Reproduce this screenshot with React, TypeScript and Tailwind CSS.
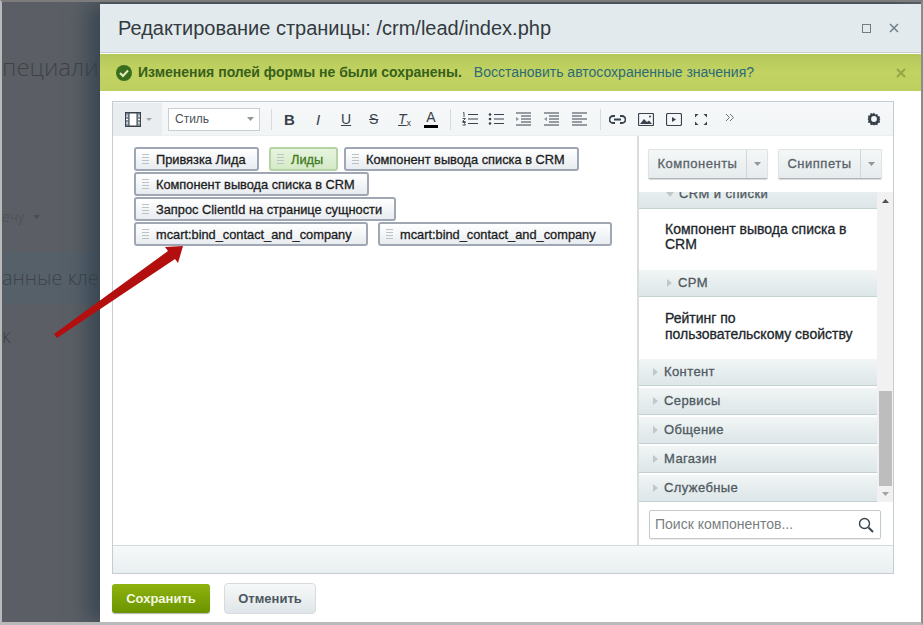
import React from "react"

const font = "font-['Liberation_Sans',Arial,sans-serif]"

function Tag({ text, green, className = "" }: { text: string; green?: boolean; className?: string }) {
  return (
    <div className={`h-[24px] shrink-0 flex items-center rounded-[3px] border-2 pl-[6px] ${green ? "border-[#b5d3a5] bg-gradient-to-b from-[#e6f4dd] to-[#d5eac8] text-[#3f7a1c]" : "border-[#a0a7b4] bg-gradient-to-b from-[#ffffff] to-[#e8ecf0] text-[#1c1c1c]"} ${className}`}>
      <span className="w-[7px] h-[11px] mr-[7px] shrink-0 flex flex-col justify-between">
        <i className="block h-px bg-[#bcc2c6]" /><i className="block h-px bg-[#bcc2c6]" /><i className="block h-px bg-[#bcc2c6]" /><i className="block h-px bg-[#bcc2c6]" />
      </span>
      <span className="text-[12.8px] leading-none pt-[3px] [-webkit-text-stroke:0.3px] whitespace-nowrap">{text}</span>
    </div>
  )
}

function Section({ text, arrowX = "ml-[26px]" }: { text: string; arrowX?: string }) {
  return (
    <div className="h-[29px] shrink-0 flex items-center border-b border-[#c5d0d3] border-t-2 border-t-white bg-gradient-to-b from-[#f1f5f5] to-[#dde6e8]">
      <svg width="5" height="8" viewBox="0 0 5 8" className={`${arrowX} mr-[6px] shrink-0`}><path d="M0 0l5 4-5 4z" fill="#c0c8ca" /></svg>
      <span className="text-[13px] [-webkit-text-stroke:0.3px] text-[#4f5a61] tracking-[0.4px]">{text}</span>
    </div>
  )
}

function SplitButton({ text, w }: { text: string; w: string }) {
  return (
    <div className={`h-[30px] ${w} flex rounded-[2px] border border-[#dfe3e5] border-b-[#aeb5b8] bg-gradient-to-b from-[#f5f7f7] to-[#e6ebed] shadow-[0_1px_1px_rgba(0,0,0,0.15)]`}>
      <div className="flex-1 flex items-center justify-center text-[13px] [-webkit-text-stroke:0.3px] text-[#59636a] tracking-[0.5px]">{text}</div>
      <div className="w-[21px] border-l border-[#d0d6d8] flex items-center justify-center">
        <svg width="7" height="4" viewBox="0 0 7 4"><path d="M0 0h7L3.5 4z" fill="#8f989c" /></svg>
      </div>
    </div>
  )
}

const Sep = () => <span className="block w-px h-[21px] bg-[#d5dade] shrink-0" />
const ic = { fill: "none", stroke: "#39434d", strokeWidth: 1.2 }

function Toolbar() {
  return (
    <div className="h-[34px] shrink-0 flex items-center pt-[1px] border-b border-[#eceff1] bg-gradient-to-b from-[#f6f8f9] to-[#f2f5f6]">
      <div className="w-[49px] h-full flex items-center bg-[#e9edf0] pl-[12px] shrink-0">
        <svg width="16" height="15" viewBox="0 0 16 15"><rect x="0.5" y="0.5" width="15" height="14" {...ic} fill="#8d97a0" /><rect x="4" y="1" width="8" height="13" fill="#fff" stroke="#39434d" /><path d="M1 4h2M1 7.5h2M1 11h2M13 4h2M13 7.5h2M13 11h2" stroke="#fff" /></svg>
        <svg width="6" height="3" viewBox="0 0 6 3" className="ml-[5px]"><path d="M0 0h6L3 3z" fill="#a0a8ad" /></svg>
      </div>
      <div className="w-[92px] h-[23px] ml-[6px] shrink-0 flex items-center justify-between border border-[#c9ced2] bg-white pl-[6px] pr-[5px] text-[12px] text-[#4b5359]">
        Стиль
        <svg width="7" height="4" viewBox="0 0 7 4"><path d="M0 0h7L3.5 4z" fill="#8f989c" /></svg>
      </div>
      <span className="ml-[11px]"><Sep /></span>
      <span className="ml-[12px] w-[11px] text-[15px] font-bold text-[#37414b] leading-none">B</span>
      <span className="ml-[21px] w-[7px] text-[15px] italic text-[#37414b] leading-none">I</span>
      <span className="ml-[18px] w-[10px] text-[14px] text-[#37414b] leading-none underline">U</span>
      <span className="ml-[18px] w-[10px] text-[14px] text-[#37414b] leading-none line-through">S</span>
      <span className="ml-[19px] w-[16px] text-[14px] italic text-[#37414b] leading-none underline">T<sub className="text-[9px] not-italic">x</sub></span>
      <span className="ml-[10px] w-[14px] flex flex-col items-center text-[14px] leading-[13px] text-[#37414b]">A<i className="block w-[14px] h-[3px] bg-black mt-[1px]" /></span>
      <span className="ml-[12px]"><Sep /></span>
      <svg width="16" height="14" viewBox="0 0 16 14" className="ml-[11px]"><path d="M6 2.5h10M6 7h10M6 11.5h10" {...ic} /><path d="M1 1l1-.5V5M0.5 6.5h3l-3 3h3M0.5 10.5h3l-1 1 1 1.5h-3" fill="none" stroke="#39434d" strokeWidth="0.9" /></svg>
      <svg width="16" height="14" viewBox="0 0 16 14" className="ml-[10px]"><path d="M6 2.5h10M6 7h10M6 11.5h10" {...ic} /><circle cx="2" cy="2.5" r="1.3" fill="#39434d" /><circle cx="2" cy="7" r="1.3" fill="#39434d" /><circle cx="2" cy="11.5" r="1.3" fill="#39434d" /></svg>
      <svg width="16" height="14" viewBox="0 0 16 14" className="ml-[12px]"><path d="M0 1h15M5 4h10M5 7h10M5 10h10M0 13h15" {...ic} /><path d="M0 5l3 2-3 2z" fill="#8d97a0" /></svg>
      <svg width="16" height="14" viewBox="0 0 16 14" className="ml-[12px]"><path d="M0 1h15M5 4h10M5 7h10M5 10h10M0 13h15" {...ic} /><path d="M3 5L0 7l3 2z" fill="#8d97a0" /></svg>
      <svg width="15" height="14" viewBox="0 0 15 14" className="ml-[12px]"><path d="M0 1h15M0 4h10M0 7h15M0 10h10M0 13h15" {...ic} /></svg>
      <span className="ml-[13px]"><Sep /></span>
      <svg width="17" height="9" viewBox="0 0 17 9" className="ml-[8px]"><path d="M6 1H4a3.5 3.5 0 000 7h2M11 1h2a3.5 3.5 0 010 7h-2M5 4.5h7" fill="none" stroke="#37414b" strokeWidth="1.8" /></svg>
      <svg width="16" height="13" viewBox="0 0 16 13" className="ml-[12px]"><rect x="0.5" y="0.5" width="15" height="12" rx="1" {...ic} /><path d="M2 11l4-5 3 3 2-1.5 3 3.5z" fill="#39434d" /><circle cx="12" cy="3.5" r="1" fill="#39434d" /></svg>
      <svg width="16" height="13" viewBox="0 0 16 13" className="ml-[12px]"><rect x="0.5" y="0.5" width="15" height="12" rx="1.5" {...ic} /><path d="M6 4l4 2.5L6 9z" fill="#39434d" /></svg>
      <svg width="14" height="13" viewBox="0 0 14 13" className="ml-[12px]"><path d="M1 1h3.5L1 4.5zM13 1H9.5L13 4.5zM1 12h3.5L1 8.5zM13 12H9.5L13 8.5z" fill="#39434d" /></svg>
      <svg width="10" height="9" viewBox="0 0 10 9" className="ml-[17px] mb-[3px]"><path d="M1 1l3.5 3.5L1 8M5 1l3.5 3.5L5 8" fill="none" stroke="#6a737a" /></svg>
      <svg width="14" height="14" viewBox="0 0 24 24" className="ml-auto mr-[12px]"><path d="M12 1l2 3.2 3.7-.9 1 3.7 3.7 1-.9 3.7L23 12l-1.5 2.3.9 3.7-3.7 1-1 3.7-3.7-.9L12 23l-2-1.2-3.7.9-1-3.7-3.7-1 .9-3.7L1 12l1.5-1.7-.9-3.7 3.7-1 1-3.7 3.7.9z" fill="#37414b" /><circle cx="12" cy="12" r="5" fill="#f4f6f7" /></svg>
    </div>
  )
}

export default function App() {
  return (
    <div className={`${font} relative w-[923px] h-[625px] overflow-hidden bg-[#5b5f65] border-t-[2px] border-t-[#7c7c7c] border-l-[2px] border-l-[#b9b9b9] border-r-[2px] border-r-[#8c8c8c] border-b-[3px] border-b-[#b9b9b9]`}>
      <div className="text-[#3f4349] font-['Open_Sans',sans-serif] font-light">
        <div className="text-[24px] leading-[32px] mt-[49px] whitespace-nowrap">пециали</div>
        <div className="flex items-center gap-[9px] text-[14px] leading-[18px] mt-[125px] text-[#4a4e54]">
          ечу
          <svg width="7" height="4" viewBox="0 0 7 4"><path d="M0 0h7L3.5 4z" fill="#4a4e54" /></svg>
        </div>
        <div className="mt-[26px] h-[52px] bg-[#566069] flex items-center text-[20px] whitespace-nowrap">анные клей</div>
        <div className="text-[20px] mt-[18px] leading-[28px]">к</div>
      </div>

      {/* modal */}
      <div className="absolute left-[98px] top-[2px] w-[823px] h-[618px] bg-white flex flex-col shadow-[-12px_0_20px_rgba(45,62,75,0.75)]">
        <div className="h-[49px] shrink-0 flex items-center bg-[#e2eaed] border-b border-[#c8ced1] pl-[18px] pr-[23px]">
          <span className="text-[20px] text-[#333a40]">Редактирование страницы: /crm/lead/index.php</span>
          <svg width="9" height="9" viewBox="0 0 9 9" className="ml-auto"><rect x="0.5" y="0.5" width="8" height="8" fill="none" stroke="#6f7d87" /></svg>
          <svg width="10" height="10" viewBox="0 0 10 10" className="ml-[18px] mr-[1px]"><path d="M1 1l8 8M9 1L1 9" stroke="#6f7d87" strokeWidth="1.5" /></svg>
        </div>
        <div className="h-[37px] mt-px shrink-0 flex items-center bg-gradient-to-b from-[#b4c85a] via-[#c2d362] to-[#bdcf60] pl-[16px] pr-[17px]">
          <svg width="16" height="16" viewBox="0 0 16 16"><circle cx="8" cy="8" r="8" fill="#3a6d1e" /><path d="M4 8l3 3 5-5.5" fill="none" stroke="#e5efc0" strokeWidth="2" /></svg>
          <span className="ml-[6px] text-[14px] font-bold text-[#37601a]">Изменения полей формы не были сохранены.</span>
          <span className="ml-[12px] text-[14px] text-[#2c6a76]">Восстановить автосохраненные значения?</span>
          <svg width="10" height="10" viewBox="0 0 10 10" className="ml-auto"><path d="M1 1l8 8M9 1L1 9" stroke="#93a745" strokeWidth="2" /></svg>
        </div>

        <div className="mt-[10px] mx-[12px] w-[782px] h-[473px] border border-[#c6ccd3] flex flex-col shrink-0">
          <Toolbar />
          <div className="flex-1 flex min-h-0">
            <div className="w-[524px] shrink-0 flex flex-col gap-[1px] pt-[11px] pl-[21px]">
              <div className="flex">
                <Tag text="Привязка Лида" className="w-[125px]" />
                <Tag text="Лиды" green className="w-[69px] ml-[10px]" />
                <Tag text="Компонент вывода списка в CRM" className="w-[235px] ml-[6px]" />
              </div>
              <Tag text="Компонент вывода списка в CRM" className="w-[235px]" />
              <Tag text="Запрос ClientId на странице сущности" className="w-[262px]" />
              <div className="flex">
                <Tag text="mcart:bind_contact_and_company" className="w-[234px]" />
                <Tag text="mcart:bind_contact_and_company" className="w-[234px] ml-[10px]" />
              </div>
            </div>
            <div className="flex-1 min-w-0 border-l-2 border-[#d8dde0] flex flex-col">
              <div className="h-[56px] shrink-0 flex items-start pt-[13px] pl-[9px] gap-[10px]">
                <SplitButton text="Компоненты" w="w-[120px]" />
                <SplitButton text="Сниппеты" w="w-[104px]" />
              </div>
              <div className="h-[310px] shrink-0 flex overflow-hidden">
                <div className="w-[238px] shrink-0 flex flex-col">
                  <div className="h-[17px] shrink-0 relative overflow-hidden border-b border-[#c5d0d3] bg-gradient-to-b from-[#e8eef0] to-[#dde6e8]">
                    <svg width="8" height="5" viewBox="0 0 8 5" className="absolute left-[27px] top-0"><path d="M0 0h8L4 5z" fill="#c0c8ca" /></svg>
                    <span className="absolute left-[40px] top-[-8px] text-[13px] [-webkit-text-stroke:0.3px] text-[#4f5a61] tracking-[0.4px]">CRM и списки</span>
                  </div>
                  <div className="h-[59px] shrink-0 pl-[26px] pt-[13px] pr-[20px] text-[14px] leading-[15px] [-webkit-text-stroke:0.3px] text-[#20262b]">Компонент вывода списка в CRM</div>
                  <Section text="СРМ" arrowX="ml-[28px]" />
                  <div className="h-[60px] shrink-0 pl-[26px] pt-[13px] text-[14px] leading-[16px] [-webkit-text-stroke:0.3px] text-[#20262b]">Рейтинг по<br />пользовательскому свойству</div>
                  <Section text="Контент" arrowX="ml-[14px]" />
                  <Section text="Сервисы" arrowX="ml-[14px]" />
                  <Section text="Общение" arrowX="ml-[14px]" />
                  <Section text="Магазин" arrowX="ml-[14px]" />
                  <Section text="Служебные" arrowX="ml-[14px]" />
                </div>
                <div className="w-[16px] shrink-0 bg-[#f1f1f1] flex flex-col items-center pt-[7px]">
                  <svg width="7" height="4" viewBox="0 0 7 4"><path d="M3.5 0L7 4H0z" fill="#505050" /></svg>
                  <div className="w-[13px] h-[95px] mt-[188px] bg-[#bdbdbd]" />
                  <svg width="7" height="4" viewBox="0 0 7 4" className="mt-[6px]"><path d="M0 0h7L3.5 4z" fill="#a3a3a3" /></svg>
                </div>
              </div>
              <div className="flex-1 pl-[10px] pt-[8px]">
                <div className="w-[232px] h-[29px] flex items-center justify-between rounded-[2px] border border-[#c3c9cc] bg-white pl-[5px] pr-[6px] text-[14px] text-[#7a7f83] shadow-[0_1px_1px_rgba(0,0,0,0.08)]">
                  Поиск компонентов...
                  <svg width="16" height="16" viewBox="0 0 16 16"><circle cx="6.5" cy="6.5" r="5" fill="none" stroke="#39434d" strokeWidth="1.4" /><path d="M10.5 10.5L15 15" stroke="#39434d" strokeWidth="2" /></svg>
                </div>
              </div>
            </div>
          </div>
          <div className="h-[28px] shrink-0 border-t border-[#d5dade] bg-gradient-to-b from-[#f6f9f9] to-[#e9eff1]" />
        </div>

        <div className="flex items-center mt-[9px] ml-[12px] gap-[14px]">
          <div className="w-[98px] h-[29px] rounded-[3px] bg-gradient-to-b from-[#8fb20e] to-[#6b9400] flex items-center justify-center text-[13px] font-bold text-[#f4f8e0] shadow-[0_1px_1px_rgba(0,0,0,0.3)]">Сохранить</div>
          <div className="w-[92px] h-[31px] rounded-[4px] border border-[#d5dbde] bg-gradient-to-b from-[#f7f9f9] to-[#dfe5e8] flex items-center justify-center text-[13px] font-bold text-[#4d5760]">Отменить</div>
        </div>
      </div>

      {/* arrow */}
      <svg className="absolute left-[50px] top-[238px]" width="140" height="100" viewBox="0 0 140 100">
        <path d="M2 94L116 11L113 7L131 6L126 23L123 19L5 98z" fill="#b30f0f" strokeLinejoin="round" />
      </svg>
    </div>
  )
}
